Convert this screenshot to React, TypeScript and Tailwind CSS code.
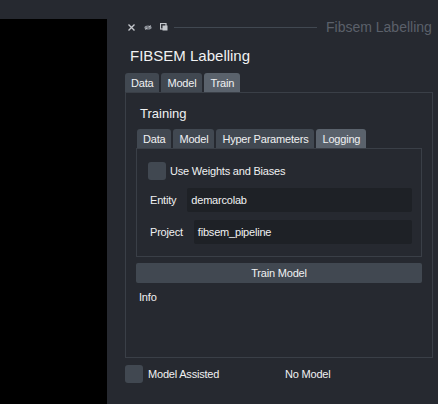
import React from 'react';

const font = { fontFamily: '"Liberation Sans", Arial, sans-serif' };

const Tab = ({ label, active }: { label: string; active?: boolean }) => (
  <div
    className={`h-[19px] px-[6px] rounded-t-[3px] text-[11px] leading-[20px] tracking-[-0.2px] text-[#f0f1f2] ${
      active ? 'bg-[#5a626c]' : 'bg-[#414851]'
    }`}
  >
    {label}
  </div>
);

const Checkbox = () => <div className="w-[18px] h-[18px] rounded-[3px] bg-[#414851]" />;

const App: React.FC = () => {
  return (
    <div className="w-[438px] h-[404px] bg-[#262930] flex overflow-hidden text-[#f0f1f2]" style={font}>
      {/* viewer canvas */}
      <div className="w-[107px] mt-[19px] bg-black shrink-0" />

      {/* dock widget */}
      <div className="flex-1 flex flex-col">
        {/* title bar */}
        <div className="mt-[19px] h-[16px] flex items-center pl-[21px] pr-[10px]">
          <svg width="7" height="7" viewBox="0 0 7 7" className="mr-[9px]">
            <path d="M0.5 0.5 L6.5 6.5 M6.5 0.5 L0.5 6.5" stroke="#c4c7cc" strokeWidth="1.4" />
          </svg>
          <svg width="8" height="5" viewBox="0 0 8 5" className="mr-[8px]">
            <ellipse cx="4" cy="2.5" rx="3.6" ry="2.1" fill="#8a8f97" />
            <circle cx="4" cy="2.5" r="1" fill="#262930" />
            <path d="M1 4.5 L7 0.5" stroke="#c4c7cc" strokeWidth="0.8" />
          </svg>
          <svg width="8" height="8" viewBox="0 0 8 8" className="mr-[6px]">
            <rect x="0.5" y="0.5" width="5.5" height="5.5" fill="none" stroke="#c4c7cc" strokeWidth="1.2" />
            <rect x="2.5" y="2.5" width="5" height="5" fill="#c4c7cc" />
          </svg>
          <div className="w-[143px] h-px bg-[#414851]" />
          <span className="ml-[9px] text-[14px] leading-[16px] text-[#5b606a] whitespace-nowrap">
            Fibsem Labelling
          </span>
        </div>

        {/* header */}
        <div className="h-[38px] pl-[23px] pt-[12px] text-[15px] leading-[18px] text-[#f0f1f2]">
          FIBSEM Labelling
        </div>

        {/* outer tabs */}
        <div className="ml-[18px] flex gap-[2px]">
          <Tab label="Data" />
          <Tab label="Model" />
          <Tab label="Train" active />
        </div>

        {/* outer panel */}
        <div className="ml-[18px] w-[308px] h-[266px] border border-[#3a3f47] flex flex-col">
          <div className="pl-[14px] pt-[13px] h-[36px] text-[13px] leading-[16px]">Training</div>

          <div className="ml-[11px] flex gap-[2px]">
            <Tab label="Data" />
            <Tab label="Model" />
            <Tab label="Hyper Parameters" />
            <Tab label="Logging" active />
          </div>

          <div className="ml-[10px] w-[286px] h-[109px] border border-[#3a3f47] pt-[13px] pl-[11px] pr-[9px] text-[11px] tracking-[-0.2px]">
            <div className="flex items-center gap-[4px]">
              <Checkbox />
              <span>Use Weights and Biases</span>
            </div>
            <div className="mt-[8px] flex items-center gap-[11px] pl-[2px]">
              <span>Entity</span>
              <div className="flex-1 h-[24px] bg-[#1e2126] rounded-[2px] pl-[4px] leading-[24px]">demarcolab</div>
            </div>
            <div className="mt-[8px] flex items-center gap-[11px] pl-[2px]">
              <span>Project</span>
              <div className="flex-1 h-[24px] bg-[#1e2126] rounded-[2px] pl-[4px] leading-[24px]">fibsem_pipeline</div>
            </div>
          </div>

          <div className="ml-[10px] mt-[6px] w-[286px] h-[20px] bg-[#414851] rounded-[2px] text-[11px] tracking-[-0.2px] leading-[20px] text-center">
            Train Model
          </div>

          <div className="pl-[13px] mt-[7px] text-[11px] tracking-[-0.2px] leading-[14px]">Info</div>
        </div>

        {/* bottom row */}
        <div className="ml-[18px] mt-[7px] flex items-center text-[11px] tracking-[-0.2px]">
          <Checkbox />
          <span className="ml-[5px] w-[137px]">Model Assisted</span>
          <span>No Model</span>
        </div>
      </div>
    </div>
  );
};

export default App;
